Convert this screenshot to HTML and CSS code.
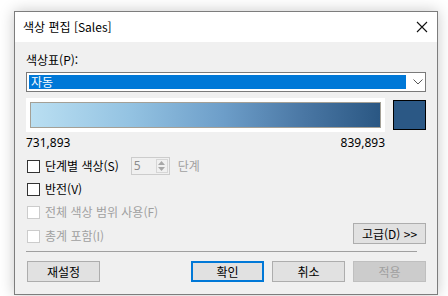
FILE: index.html
```html
<!DOCTYPE html>
<html lang="ko">
<head>
<meta charset="utf-8">
<link rel="stylesheet" href="styles.css">
</head>
<body>
<div class="dialog">
  <div class="titlebar">
    <span class="title">색상 편집 [Sales]</span>
    <svg class="close" width="12" height="12" viewBox="0 0 12 12"><path d="M1 1L11 11M11 1L1 11" stroke="#111" stroke-width="1.1"/></svg>
  </div>
  <div class="content">
    <div class="label">색상표(P):</div>
    <div class="select">
      <div class="select-value">자동</div>
      <svg class="chev" width="10" height="6" viewBox="0 0 10 6"><path d="M0.5 0.5L5 5L9.5 0.5" fill="none" stroke="#555" stroke-width="1"/></svg>
    </div>
    <div class="ramp-row">
      <div class="ramp-panel"><div class="ramp"></div></div>
      <div class="swatch"></div>
    </div>
    <div class="range"><span>731,893</span><span>839,893</span></div>
    <div class="check-row r1">
      <span class="box"></span><span class="txt">단계별 색상(S)</span>
      <div class="spin"><span class="spin-val">5</span>
        <div class="spin-btns">
          <svg width="7" height="4" viewBox="0 0 7 4"><path d="M0 4L3.5 0L7 4Z" fill="#a8a8a8"/></svg>
          <svg width="7" height="4" viewBox="0 0 7 4"><path d="M0 0L3.5 4L7 0Z" fill="#a8a8a8"/></svg>
        </div>
      </div>
      <span class="txt dis steps">단계</span>
    </div>
    <div class="check-row r2"><span class="box"></span><span class="txt">반전(V)</span></div>
    <div class="check-row r3"><span class="box dis"></span><span class="txt dis">전체 색상 범위 사용(F)</span></div>
    <div class="last-row">
      <div class="check-row r4"><span class="box dis"></span><span class="txt dis">총계 포함(I)</span></div>
      <button class="btn">고급(D) &gt;&gt;</button>
    </div>
    <div class="sep"></div>
    <div class="buttons">
      <button class="btn">재설정</button>
      <div class="spacer"></div>
      <button class="btn default">확인</button>
      <button class="btn">취소</button>
      <button class="btn disabled">적용</button>
    </div>
  </div>
</div>
</body>
</html>
```

FILE: styles.css
```css
html, body {
  margin: 0;
  padding: 0;
  background: #ffffff;
}
body {
  font-family: "Noto Sans", "Noto Sans CJK KR", sans-serif;
  font-size: 12px;
  color: #000;
  padding: 11px 0 0 14px;
  width: 448px;
  height: 296px;
  box-sizing: border-box;
  overflow: hidden;
}
.dialog {
  width: 424px;
  height: 284px;
  box-sizing: border-box;
  border: 1px solid #7d7d7d;
  background: #f0f0f0;
  box-shadow: 0 0 14px rgba(0,0,0,0.22);
  display: flex;
  flex-direction: column;
}
.titlebar {
  height: 30px;
  background: #fff;
  display: flex;
  align-items: center;
  justify-content: space-between;
  padding: 0 9px 0 8px;
  flex-shrink: 0;
}
.title {
  font-size: 12px;
  line-height: 16px;
  font-family: "Noto Sans CJK KR", sans-serif;
  margin-top: -1px;
}
.close { display: block; }
.content {
  padding: 10px 11px 11px 11px;
  display: flex;
  flex-direction: column;
}
.label {
  height: 16px;
  line-height: 16px;
  font-family: "Noto Sans CJK KR", sans-serif;
}
.select {
  margin-top: 4px;
  height: 20px;
  box-sizing: border-box;
  border: 1px solid #7a7a7a;
  background: #fff;
  display: flex;
  align-items: center;
  padding: 2px;
}
.select-value {
  width: 378px;
  height: 14px;
  background: #0078d7;
  color: #fff;
  line-height: 14px;
  padding-left: 2px;
  box-sizing: border-box;
  font-family: "Noto Sans CJK KR", sans-serif;
}
.chev { margin-left: 7px; }
.ramp-row {
  margin-top: 6px;
  display: flex;
  align-items: center;
  gap: 8px;
}
.ramp-panel {
  width: 359px;
  height: 34px;
  background: #fff;
  padding: 4px;
  box-sizing: border-box;
}
.ramp {
  height: 26px;
  box-sizing: border-box;
  border: 1px solid #a4a096;
  background: linear-gradient(to right, #badff2 0%, #94c3e2 28%, #6d9ec9 55%, #4a77a4 78%, #2a5783 100%);
}
.swatch {
  width: 33px;
  height: 30px;
  box-sizing: border-box;
  border: 1px solid #000;
  background: #2b5885;
}
.range {
  margin-top: 3px;
  width: 359px;
  height: 16px;
  line-height: 16px;
  display: flex;
  justify-content: space-between;
}
.check-row {
  display: flex;
  align-items: center;
  height: 18px;
}
.r1 { margin-top: 6px; }
.r2, .r3 { margin-top: 5px; }
.box {
  width: 13px;
  height: 13px;
  box-sizing: border-box;
  border: 1px solid #333;
  background: #fff;
  margin-left: 1px;
  margin-right: 5px;
}
.box.dis { border-color: #cccccc; }
.txt {
  font-family: "Noto Sans CJK KR", sans-serif;
  line-height: 16px;
}
.txt.dis { color: #a0a0a0; }
.spin {
  margin-left: 12px;
  width: 39px;
  height: 18px;
  box-sizing: border-box;
  border: 1px solid #cccccc;
  display: flex;
  align-items: center;
  justify-content: space-between;
  padding: 0 1px 0 2px;
}
.spin-val { color: #8c8c8c; line-height: 16px; }
.spin-btns {
  width: 12px;
  height: 14px;
  box-sizing: border-box;
  border: 1px solid #d6d6d6;
  display: flex;
  flex-direction: column;
  align-items: center;
  justify-content: space-around;
}
.spin-btns svg { display: block; }
.steps { margin-left: 8px; }
.last-row {
  margin-top: 2px;
  height: 21px;
  display: flex;
  justify-content: space-between;
  align-items: flex-end;
}
.last-row .check-row { margin-bottom: -1px; }
.btn {
  width: 73px;
  height: 21px;
  box-sizing: border-box;
  border: 1px solid #adadad;
  background: #e1e1e1;
  font-family: "Noto Sans CJK KR", sans-serif;
  font-size: 12px;
  line-height: 17px;
  padding: 0;
  color: #000;
  text-align: center;
}
.sep {
  margin-top: 7px;
  height: 1px;
  width: 391px;
  background: #a0a0a0;
}
.buttons {
  margin-top: 9px;
  display: flex;
  gap: 8px;
  padding-left: 1px;
}
.spacer { flex: 1; }
.btn.default {
  border: 2px solid #0078d7;
  line-height: 15px;
}
.btn.disabled {
  background: #cccccc;
  border-color: #bfbfbf;
  color: #a0a0a0;
}
```
